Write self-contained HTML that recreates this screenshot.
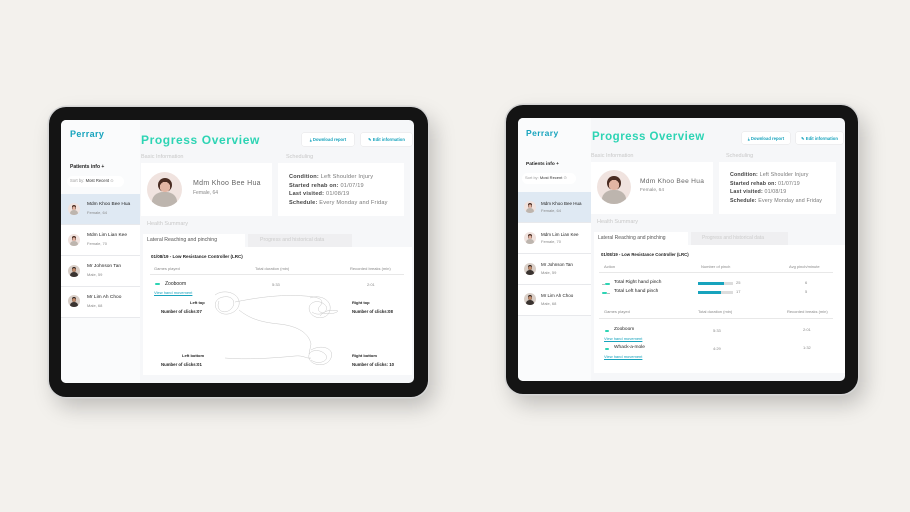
<!DOCTYPE html>
<html><head><meta charset="utf-8"><style>
*{margin:0;padding:0;box-sizing:border-box}
body{width:910px;height:512px;background:#f3f1ed;position:relative;overflow:hidden;font-family:"Liberation Sans",sans-serif}
.a{position:absolute}
.t{position:absolute;white-space:nowrap;line-height:1}
.tab{position:absolute;background:#141414;border-radius:17px;box-shadow:0 0 0 1.5px #d6d6d6,6px 10px 22px rgba(0,0,0,.22)}
.scr{position:absolute;background:#f6f7f9;border-radius:5px;overflow:hidden}
.side{position:absolute;background:#fff}
.card{position:absolute;background:#fff}
.lbl{color:#c8c8c8;font-size:5.5px}
.teal{color:#17a3bd}
.h{color:#888;font-size:4px}
.b{font-weight:bold;color:#222}
.av{position:absolute;border-radius:50%;overflow:hidden;background:#f0e3df}
.av::before{content:"";position:absolute;left:30%;top:18%;width:40%;height:40%;border-radius:50%;background:radial-gradient(circle at 50% 65%,#e2b5a3 0 45%,#4a2c22 46%)}
.av::after{content:"";position:absolute;left:15%;top:58%;width:70%;height:60%;border-radius:45% 45% 0 0;background:#bdb5ae}
.av.m{background:#d9cfc8}
.av.m::before{background:radial-gradient(circle at 50% 60%,#c48e6e 0 50%,#2a1e1a 51%)}
.av.m::after{background:#3a3330}
.item{position:absolute;border-bottom:1px solid #e8e9ec;background:#fff}
.btn{position:absolute;background:#fff;border-radius:2px;box-shadow:0 0 0 .5px #e6e6e6;color:#17a3bd;font-size:4.2px;font-weight:bold;display:flex;align-items:center;justify-content:center}
.dash{position:absolute;height:2px;background:#2dd4b4;border-radius:1px}
.link{color:#17a3bd;font-size:4px;text-decoration:underline}
</style></head><body>

<!-- LEFT TABLET -->
<div class="tab" style="left:49px;top:107px;width:379px;height:290px"></div>
<div class="scr" style="left:61px;top:120px;width:353px;height:263px">
 <div class="side" style="left:0;top:0;width:79px;height:263px;background:#fafbfc"></div>
</div>
<div class="t teal" style="left:70px;top:130px;font-size:9px;font-weight:bold;letter-spacing:.4px">Perrary</div>
<div class="t b" style="left:70px;top:165px;font-size:5px">Patients info +</div>
<div class="a" style="left:67px;top:176px;width:57px;height:11px;background:#fff;border-radius:6px"></div>
<div class="t" style="left:70px;top:179px;font-size:4.2px;color:#999">Sort by: <span style="color:#333">Most Recent</span> ⊙</div>
<div class="item" style="left:61px;top:194px;width:79px;height:31px;background:#dfe9f3"></div>
<div class="item" style="left:61px;top:225px;width:79px;height:31px"></div>
<div class="item" style="left:61px;top:256px;width:79px;height:31px"></div>
<div class="item" style="left:61px;top:287px;width:79px;height:31px"></div>
<div class="av" style="left:68px;top:203px;width:12px;height:12px"></div>
<div class="av" style="left:68px;top:234px;width:12px;height:12px"></div>
<div class="av m" style="left:68px;top:265px;width:12px;height:12px"></div>
<div class="av m" style="left:68px;top:295px;width:12px;height:12px"></div>
<div class="t" style="left:87px;top:203px;font-size:4.8px;color:#222">Mdm Khoo Bee Hua</div>
<div class="t h" style="left:87px;top:211px">Female, 64</div>
<div class="t" style="left:87px;top:234px;font-size:4.8px;color:#222">Mdm Lim Lian Kee</div>
<div class="t h" style="left:87px;top:242px">Female, 70</div>
<div class="t" style="left:87px;top:265px;font-size:4.8px;color:#222">Mr Johnson Tan</div>
<div class="t h" style="left:87px;top:273px">Male, 59</div>
<div class="t" style="left:87px;top:296px;font-size:4.8px;color:#222">Mr Lim Ah Choo</div>
<div class="t h" style="left:87px;top:304px">Male, 68</div>

<div class="t" style="left:141px;top:134px;font-size:12px;font-weight:bold;color:#2dd4b4;letter-spacing:.6px">Progress Overview</div>
<div class="btn" style="left:302px;top:133px;width:52px;height:13px">⤓ Download report</div>
<div class="btn" style="left:361px;top:133px;width:51px;height:13px">✎ Edit information</div>
<div class="t lbl" style="left:141px;top:155px">Basic Information</div>
<div class="t lbl" style="left:286px;top:155px">Scheduling</div>
<div class="card" style="left:141px;top:163px;width:131px;height:53px"></div>
<div class="av" style="left:147px;top:172px;width:35px;height:35px"></div>
<div class="t" style="left:193px;top:180px;font-size:7px;color:#666;letter-spacing:.3px">Mdm Khoo Bee Hua</div>
<div class="t" style="left:193px;top:191px;font-size:5px;color:#888">Female, 64</div>
<div class="card" style="left:278px;top:163px;width:126px;height:53px"></div>
<div class="t" style="left:289px;top:173px;font-size:5.6px;color:#777;line-height:8.7px;letter-spacing:.2px"><b style="color:#444">Condition:</b> Left Shoulder Injury<br><b style="color:#444">Started rehab on:</b> 01/07/19<br><b style="color:#444">Last visited:</b> 01/08/19<br><b style="color:#444">Schedule:</b> Every Monday and Friday</div>
<div class="t lbl" style="left:147px;top:222px">Health Summary</div>
<div class="a" style="left:143px;top:234px;width:102px;height:14px;background:#fff"></div>
<div class="a" style="left:248px;top:234px;width:104px;height:13px;background:#efeff1"></div>
<div class="t" style="left:147px;top:238px;font-size:5.2px;color:#555">Lateral Reaching and pinching</div>
<div class="t" style="left:260px;top:238px;font-size:5.2px;color:#ccc">Progress and historical data</div>
<div class="card" style="left:143px;top:247px;width:269px;height:128px"></div>
<div class="t b" style="left:151px;top:255px;font-size:4.5px">01/08/19 - Low Resistance Controller (LRC)</div>
<div class="t h" style="left:154px;top:267px">Games played</div>
<div class="t h" style="left:255px;top:267px">Total duration (min)</div>
<div class="t h" style="left:350px;top:267px">Recorded breaks (min)</div>
<div class="a" style="left:150px;top:274px;width:254px;height:1px;background:#e8e8e8"></div>
<div class="dash" style="left:155px;top:283px;width:5px"></div>
<div class="t" style="left:165px;top:282px;font-size:5px;color:#222">Zooboom</div>
<div class="t h" style="left:272px;top:283px">5:33</div>
<div class="t h" style="left:367px;top:283px">2:01</div>
<div class="t link" style="left:154px;top:291px">View hand movement</div>
<svg class="a" style="left:205px;top:290px" width="150" height="80" viewBox="0 0 150 80" fill="none" stroke="#c8c8c8" stroke-width=".5">
<path d="M10 5c8-6 22-3 24 6s-10 16-18 12-8-14 2-16 14 6 8 12-16 2-12-8M30 12c20-4 45-8 70-6 15 1 20 4 15 10-8 8 14 10 18 5-8-2-14 0-18 5M105 8c10-4 22 2 20 12s-16 10-20 2 6-14 14-8-4 14-12 8M34 20c10 8 20 12 40 14 20 2 30 10 32 20l-2 10M106 60c10-6 24-2 20 8s-20 8-22 0 10-10 16-4-6 12-14 6M20 68c20 2 50 0 70-2 8-1 12 3 16 2"/>
</svg>
<div class="t b" style="left:190px;top:301px;font-size:4px">Left top</div>
<div class="t b" style="left:161px;top:310px;font-size:4.3px">Number of clicks:07</div>
<div class="t b" style="left:352px;top:301px;font-size:4px">Right top</div>
<div class="t b" style="left:352px;top:310px;font-size:4.3px">Number of clicks:08</div>
<div class="t b" style="left:182px;top:354px;font-size:4px">Left bottom</div>
<div class="t b" style="left:161px;top:363px;font-size:4.3px">Number of clicks:01</div>
<div class="t b" style="left:352px;top:354px;font-size:4px">Right bottom</div>
<div class="t b" style="left:352px;top:363px;font-size:4.3px">Number of clicks: 10</div>

<!-- RIGHT TABLET -->
<div class="tab" style="left:506px;top:105px;width:352px;height:289px"></div>
<div class="scr" style="left:518px;top:118px;width:327px;height:263px">
 <div class="side" style="left:0;top:0;width:73px;height:263px;background:#fafbfc"></div>
</div>
<div class="t teal" style="left:526px;top:129px;font-size:8.5px;font-weight:bold;letter-spacing:.4px">Perrary</div>
<div class="t b" style="left:526px;top:163px;font-size:4.8px">Patients info +</div>
<div class="a" style="left:522px;top:173px;width:54px;height:11px;background:#fff;border-radius:6px"></div>
<div class="t" style="left:525px;top:176px;font-size:4px;color:#999">Sort by: <span style="color:#333">Most Recent</span> ⊙</div>
<div class="item" style="left:518px;top:192px;width:73px;height:31px;background:#dfe9f3"></div>
<div class="item" style="left:518px;top:223px;width:73px;height:31px"></div>
<div class="item" style="left:518px;top:254px;width:73px;height:31px"></div>
<div class="item" style="left:518px;top:285px;width:73px;height:31px"></div>
<div class="av" style="left:524px;top:201px;width:12px;height:12px"></div>
<div class="av" style="left:524px;top:232px;width:12px;height:12px"></div>
<div class="av m" style="left:524px;top:263px;width:12px;height:12px"></div>
<div class="av m" style="left:524px;top:293px;width:12px;height:12px"></div>
<div class="t" style="left:541px;top:202px;font-size:4.5px;color:#222">Mdm Khoo Bee Hua</div>
<div class="t h" style="left:541px;top:209px">Female, 64</div>
<div class="t" style="left:541px;top:233px;font-size:4.5px;color:#222">Mdm Lim Lian Kee</div>
<div class="t h" style="left:541px;top:240px">Female, 70</div>
<div class="t" style="left:541px;top:263px;font-size:4.5px;color:#222">Mr Johnson Tan</div>
<div class="t h" style="left:541px;top:271px">Male, 59</div>
<div class="t" style="left:541px;top:294px;font-size:4.5px;color:#222">Mr Lim Ah Choo</div>
<div class="t h" style="left:541px;top:302px">Male, 68</div>

<div class="t" style="left:592px;top:132px;font-size:11.5px;font-weight:bold;color:#2dd4b4;letter-spacing:.5px">Progress Overview</div>
<div class="btn" style="left:742px;top:132px;width:48px;height:12px">⤓ Download report</div>
<div class="btn" style="left:796px;top:132px;width:47px;height:12px">✎ Edit information</div>
<div class="t lbl" style="left:591px;top:154px">Basic Information</div>
<div class="t lbl" style="left:726px;top:154px">Scheduling</div>
<div class="card" style="left:591px;top:162px;width:122px;height:52px"></div>
<div class="av" style="left:597px;top:170px;width:34px;height:34px"></div>
<div class="t" style="left:640px;top:179px;font-size:6.6px;color:#666;letter-spacing:.3px">Mdm Khoo Bee Hua</div>
<div class="t" style="left:640px;top:189px;font-size:4.8px;color:#888">Female, 64</div>
<div class="card" style="left:719px;top:162px;width:117px;height:52px"></div>
<div class="t" style="left:730px;top:171px;font-size:5.3px;color:#777;line-height:8.6px;letter-spacing:.15px"><b style="color:#444">Condition:</b> Left Shoulder Injury<br><b style="color:#444">Started rehab on:</b> 01/07/19<br><b style="color:#444">Last visited:</b> 01/08/19<br><b style="color:#444">Schedule:</b> Every Monday and Friday</div>
<div class="t lbl" style="left:597px;top:220px">Health Summary</div>
<div class="a" style="left:594px;top:232px;width:94px;height:14px;background:#fff"></div>
<div class="a" style="left:691px;top:232px;width:97px;height:13px;background:#efeff1"></div>
<div class="t" style="left:598px;top:236px;font-size:5px;color:#555">Lateral Reaching and pinching</div>
<div class="t" style="left:702px;top:236px;font-size:5px;color:#ccc">Progress and historical data</div>
<div class="card" style="left:594px;top:245px;width:251px;height:128px"></div>
<div class="t b" style="left:601px;top:253px;font-size:4.3px">01/08/19 - Low Resistance Controller (LRC)</div>
<div class="t h" style="left:604px;top:265px">Action</div>
<div class="t h" style="left:701px;top:265px">Number of pinch</div>
<div class="t h" style="left:789px;top:265px">Avg pinch/minute</div>
<div class="a" style="left:599px;top:272px;width:234px;height:1px;background:#e8e8e8"></div>
<div class="dash" style="left:605px;top:283px;width:5px"></div><div class="a" style="left:602px;top:283.5px;width:3px;height:1px;background:#bbb"></div>
<div class="t" style="left:614px;top:281px;font-size:4.8px;color:#222">Total Right hand pinch</div>
<div class="a" style="left:698px;top:282px;width:35px;height:3px;background:#ddd"></div><div class="a" style="left:698px;top:282px;width:26px;height:3px;background:#17a3bd"></div>
<div class="t h" style="left:736px;top:281px">25</div><div class="t h" style="left:805px;top:281px">6</div>
<div class="dash" style="left:602px;top:292px;width:5px"></div><div class="a" style="left:607px;top:292.5px;width:3px;height:1px;background:#bbb"></div>
<div class="t" style="left:614px;top:290px;font-size:4.8px;color:#222">Total Left hand pinch</div>
<div class="a" style="left:698px;top:291px;width:35px;height:3px;background:#ddd"></div><div class="a" style="left:698px;top:291px;width:23px;height:3px;background:#17a3bd"></div>
<div class="t h" style="left:736px;top:290px">17</div><div class="t h" style="left:805px;top:290px">5</div>
<div class="t h" style="left:604px;top:310px">Games played</div>
<div class="t h" style="left:698px;top:310px">Total duration (min)</div>
<div class="t h" style="left:787px;top:310px">Recorded breaks (min)</div>
<div class="a" style="left:599px;top:318px;width:234px;height:1px;background:#e8e8e8"></div>
<div class="dash" style="left:605px;top:330px;width:4px"></div>
<div class="t" style="left:614px;top:328px;font-size:4.8px;color:#222">Zooboom</div>
<div class="t h" style="left:713px;top:329px">5:33</div><div class="t h" style="left:803px;top:328px">2:01</div>
<div class="t link" style="left:604px;top:337px">View hand movement</div>
<div class="dash" style="left:605px;top:348px;width:4px"></div>
<div class="t" style="left:614px;top:346px;font-size:4.8px;color:#222">Whack-a-mole</div>
<div class="t h" style="left:713px;top:347px">4:29</div><div class="t h" style="left:803px;top:346px">1:32</div>
<div class="t link" style="left:604px;top:355px">View hand movement</div>
</body></html>
